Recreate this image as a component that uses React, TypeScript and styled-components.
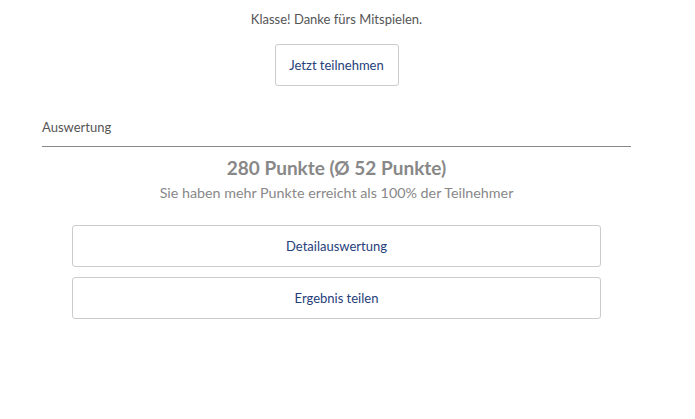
import styled, { createGlobalStyle } from "styled-components";

const GlobalStyle = createGlobalStyle`
  body {
    margin: 0;
    background: #fff;
    font-family: Lato, "Liberation Sans", sans-serif;
  }
`;

const Page = styled.div`
  width: 589px;
  margin-left: 42px;
  padding-top: 10px;
  display: flex;
  flex-direction: column;
`;

const Thanks = styled.p`
  margin: 0;
  text-align: center;
  font-size: 13px;
  line-height: 18px;
  color: #555;
`;

const ButtonRow = styled.div`
  display: flex;
  justify-content: center;
  margin-top: 16px;
`;

const Button = styled.button<{ $wide?: boolean }>`
  height: 42px;
  width: ${(p) => (p.$wide ? "100%" : "124px")};
  background: #fff;
  border: 1px solid #ccc;
  border-radius: 3px;
  color: #26407a;
  font-family: inherit;
  font-size: 13px;
  cursor: pointer;
`;

const SectionTitle = styled.div`
  margin-top: 32px;
  padding-bottom: 10px;
  font-size: 13px;
  line-height: 18px;
  color: #555;
  border-bottom: 1px solid #888;
`;

const Score = styled.h2`
  margin: 9px 0 0;
  text-align: center;
  font-size: 19px;
  line-height: 24px;
  font-weight: 700;
  color: #888;
`;

const Summary = styled.p`
  margin: 3px 0 0;
  text-align: center;
  font-size: 14.3px;
  line-height: 20px;
  color: #888;
`;

const Actions = styled.div`
  display: flex;
  flex-direction: column;
  gap: 10px;
  margin: 22px 30px 0;
`;

export default function App() {
  return (
    <>
      <GlobalStyle />
      <Page>
        <Thanks>Klasse! Danke fürs Mitspielen.</Thanks>
        <ButtonRow>
          <Button>Jetzt teilnehmen</Button>
        </ButtonRow>
        <SectionTitle>Auswertung</SectionTitle>
        <Score>280 Punkte (Ø 52 Punkte)</Score>
        <Summary>Sie haben mehr Punkte erreicht als 100% der Teilnehmer</Summary>
        <Actions>
          <Button $wide>Detailauswertung</Button>
          <Button $wide>Ergebnis teilen</Button>
        </Actions>
      </Page>
    </>
  );
}
